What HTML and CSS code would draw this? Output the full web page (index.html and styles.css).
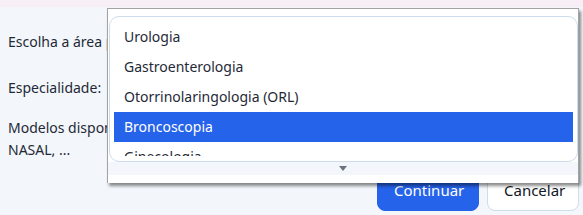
FILE: index.html
```html
<!DOCTYPE html>
<html lang="pt">
<head>
    <meta charset="UTF-8">
    <title>Selecionar especialidade</title>
    <link rel="stylesheet" href="styles.css">
</head>
<body>
    <div class="topbar"></div>
    <div class="dialog">
        <div class="form-row first">
            <span>Escolha a área principal</span>
            <span class="focus-box"></span>
        </div>
        <div class="form-row">
            <span>Especialidade:</span>
        </div>
        <div class="form-row models">
            <span>Modelos disponíveis: ORAL,<br>NASAL, ...</span>
        </div>
        <div class="actions">
            <button class="btn primary">Continuar</button>
            <button class="btn">Cancelar</button>
        </div>
    </div>

    <div class="dropdown">
        <div class="options">
            <div class="option-list">
                <div class="option">Urologia</div>
                <div class="option">Gastroenterologia</div>
                <div class="option">Otorrinolaringologia (ORL)</div>
                <div class="option selected">Broncoscopia</div>
                <div class="option">Ginecologia</div>
            </div>
        </div>
        <div class="scroll-down"><span class="arrow"></span></div>
    </div>
</body>
</html>
```

FILE: styles.css
```css
body {
    margin: 0;
    font-family: "Noto Sans", sans-serif;
    font-size: 14px;
    color: #1f2937;
    background-color: #f3f7fb;
    width: 583px;
    height: 215px;
    overflow: hidden;
}
.topbar {
    height: 7px;
    background-color: #f7eef6;
}
.dialog {
    padding: 0 4px 0 8px;
}
.form-row {
    display: flex;
    align-items: center;
    height: 22px;
    line-height: 22px;
    white-space: nowrap;
}
.form-row.first {
    margin-top: 24px;
}
.form-row + .form-row {
    margin-top: 24px;
}
.form-row.models {
    margin-top: 18px;
    height: 44px;
}
.focus-box {
    display: inline-block;
    width: 40px;
    height: 20px;
    border-left: 2px solid #c8793a;
    margin-left: 4px;
}
.actions {
    display: flex;
    justify-content: flex-end;
    gap: 8px;
    margin-top: 7px;
}
.btn {
    font-family: "Noto Sans", sans-serif;
    font-size: 15px;
    height: 43px;
    padding: 0 16px;
    border: 1px solid #cfdcea;
    border-radius: 8px;
    background-color: white;
    color: #111827;
    cursor: pointer;
}
.btn.primary {
    width: 102px;
    background-color: #2563eb;
    border-color: #2563eb;
    color: white;
}
.btn:not(.primary) {
    width: 92px;
}
.dropdown {
    position: absolute;
    left: 107px;
    top: 8px;
    width: 470px;
    height: 174px;
    background-color: white;
    border: 1px solid #a3a3a3;
    border-bottom: none;
    box-shadow: 2px 3px 3px rgba(0, 0, 0, 0.45);
    display: flex;
    flex-direction: column;
}
.options {
    margin: 7px 0 0 1px;
    height: 146px;
    box-sizing: border-box;
    border: 1px solid #cddcec;
    border-radius: 10px;
    padding: 5px 4px 0;
}
.option-list {
    height: 134px;
    overflow: hidden;
}
.option {
    height: 30px;
    line-height: 30px;
    padding-left: 10px;
    color: #1f2937;
}
.option.selected {
    background-color: #2563eb;
    color: white;
}
.scroll-down {
    height: 13px;
    background-color: #f3f7fb;
    display: flex;
    justify-content: center;
    align-items: center;
}
.arrow {
    width: 0;
    height: 0;
    border-left: 4px solid transparent;
    border-right: 4px solid transparent;
    border-top: 5px solid #6b7280;
}
```
